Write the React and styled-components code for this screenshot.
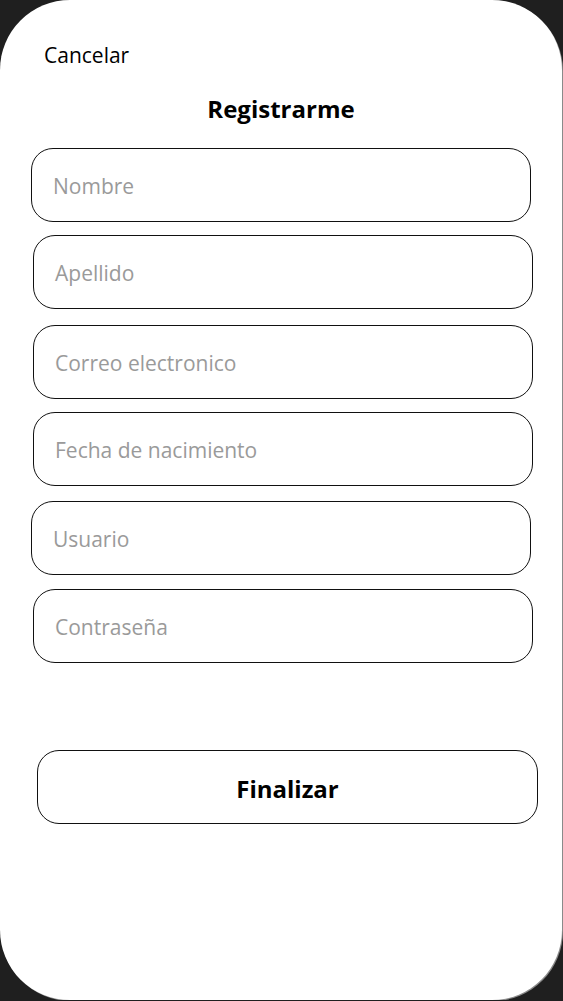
import React from 'react'
import styled, { createGlobalStyle } from "styled-components"

const Global = createGlobalStyle`
    html, body {
        margin: 0;
        padding: 0;
        background: #1f1f1f;
    }
    * { box-sizing: border-box; }
`

const Screen = styled.div`
    width: 562px;
    height: 1000px;
    background: #fff;
    border-radius: 70px;
    box-shadow: 1px 1px 0 #8a8a8a;
    display: flex;
    flex-direction: column;
    font-family: "Open Sans", "Noto Sans", sans-serif;
    color: #000;
`

const Cancel = styled.div`
    padding: 41px 0 0 44px;
    font-size: 21px;
    line-height: 28px;
    height: 69px;
`

const Title = styled.h1`
    margin: 24px 0 0 0;
    text-align: center;
    font-size: 24px;
    font-weight: 700;
    line-height: 32px;
`

const Form = styled.div`
    display: flex;
    flex-direction: column;
    margin-top: 23px;
`

const Field = styled.div`
    width: 500px;
    height: 74px;
    margin-left: ${p => p.dx}px;
    margin-top: ${p => p.dy}px;
    border: 1.5px solid #111;
    border-radius: 22px;
    display: flex;
    align-items: center;
    padding-left: 21px;
    padding-top: 2px;
    font-size: 21px;
    color: #9a9a9a;
`

const Submit = styled.div`
    width: 501px;
    height: 74px;
    margin: 87px 0 0 37px;
    border: 1.5px solid #111;
    border-radius: 22px;
    display: flex;
    align-items: center;
    justify-content: center;
    padding-top: 2px;
    font-size: 24px;
    font-weight: 700;
`

const fields = [
    { label: "Nombre", dx: 31, dy: 0 },
    { label: "Apellido", dx: 33, dy: 13 },
    { label: "Correo electronico", dx: 33, dy: 16 },
    { label: "Fecha de nacimiento", dx: 33, dy: 13 },
    { label: "Usuario", dx: 31, dy: 15 },
    { label: "Contraseña", dx: 33, dy: 14 },
]

function App() {
  return (
    <>
      <Global />
      <Screen>
        <Cancel>Cancelar</Cancel>
        <Title>Registrarme</Title>
        <Form>
          {fields.map(f => (
            <Field key={f.label} dx={f.dx} dy={f.dy}>{f.label}</Field>
          ))}
        </Form>
        <Submit>Finalizar</Submit>
      </Screen>
    </>
  )
}

export default App
